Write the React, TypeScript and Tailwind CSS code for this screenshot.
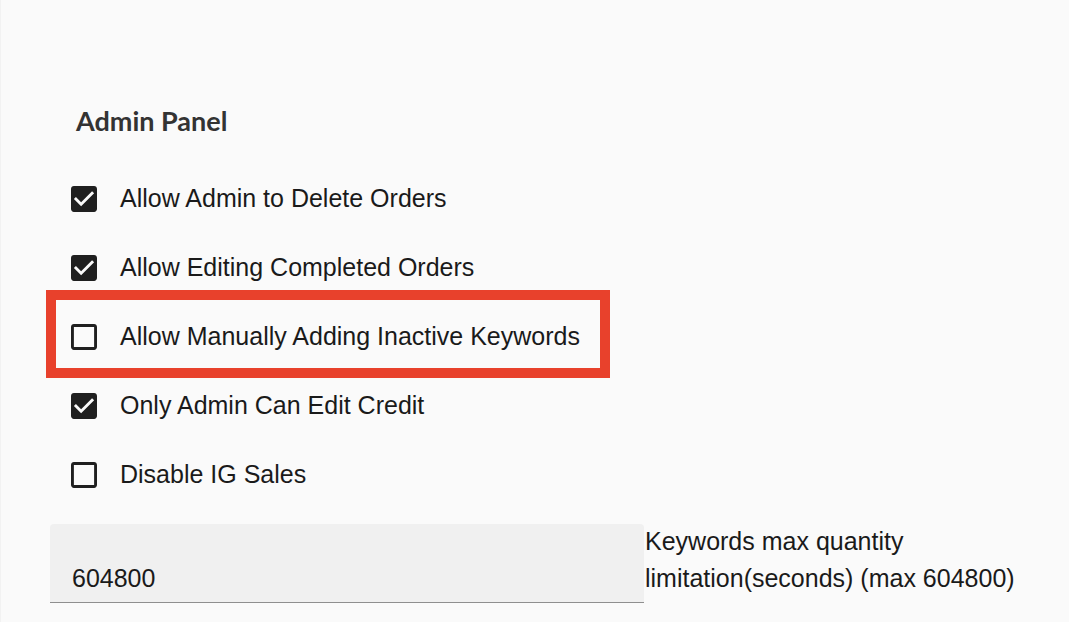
import React from "react";

type Option = {
  label: string;
  checked: boolean;
  highlight?: boolean;
};

const options: Option[] = [
  { label: "Allow Admin to Delete Orders", checked: true },
  { label: "Allow Editing Completed Orders", checked: true },
  { label: "Allow Manually Adding Inactive Keywords", checked: false, highlight: true },
  { label: "Only Admin Can Edit Credit", checked: true },
  { label: "Disable IG Sales", checked: false },
];

const CheckIcon = ({ checked }: { checked: boolean }) => (
  <svg width="26" height="26" viewBox="3 3 18 18" className="shrink-0" fill="#1f1f1f">
    {checked ? (
      <path d="M19 3H5c-1.11 0-2 .9-2 2v14c0 1.1.89 2 2 2h14c1.11 0 2-.9 2-2V5c0-1.1-.89-2-2-2zm-9 14l-5-5 1.41-1.41L10 14.17l7.59-7.59L19 8l-9 9z" />
    ) : (
      <path d="M19 5v14H5V5h14m0-2H5c-1.1 0-2 .9-2 2v14c0 1.1.9 2 2 2h14c1.1 0 2-.9 2-2V5c0-1.1-.9-2-2-2z" />
    )}
  </svg>
);

export default function App() {
  return (
    <div className="w-[1080px] h-[622px] bg-white flex overflow-hidden">
      <div className="w-[1069px] h-full bg-[#fafafa] border-l border-[#f2f2f2] pl-[49px] pt-[105px] text-[#1a1a1a] font-['Liberation_Sans',Arial,sans-serif]">
        <h2 className="pl-[26px] text-[27px] leading-[32px] font-bold text-[#333] font-['Lato',sans-serif]">
          Admin Panel
        </h2>

        <div className="mt-[27px] flex flex-col">
          {options.map((opt) => (
            <div key={opt.label} className="relative h-[69px] flex items-center">
              <div className="ml-[21px] flex items-center gap-[23px]">
                <CheckIcon checked={opt.checked} />
                <span className="text-[25px] leading-[29px]">{opt.label}</span>
              </div>
              {opt.highlight && (
                <div className="absolute -left-[4px] -top-[12px] w-[564px] h-[88px] border-[10px] border-[#e8412c] pointer-events-none" />
              )}
            </div>
          ))}
        </div>

        <div className="mt-[15px] flex items-start gap-[1px]">
          <div className="w-[594px] h-[79px] shrink-0 bg-[#f0f0f0] rounded-t-[4px] border-b border-[#8f8f8f] pl-[22px] pt-[40px]">
            <span className="text-[25px] leading-[29px]">604800</span>
          </div>
          <div className="-mt-[1px] w-[415px] text-[25px] leading-[37px]">
            Keywords max quantity limitation(seconds) (max 604800)
          </div>
        </div>
      </div>
    </div>
  );
}
